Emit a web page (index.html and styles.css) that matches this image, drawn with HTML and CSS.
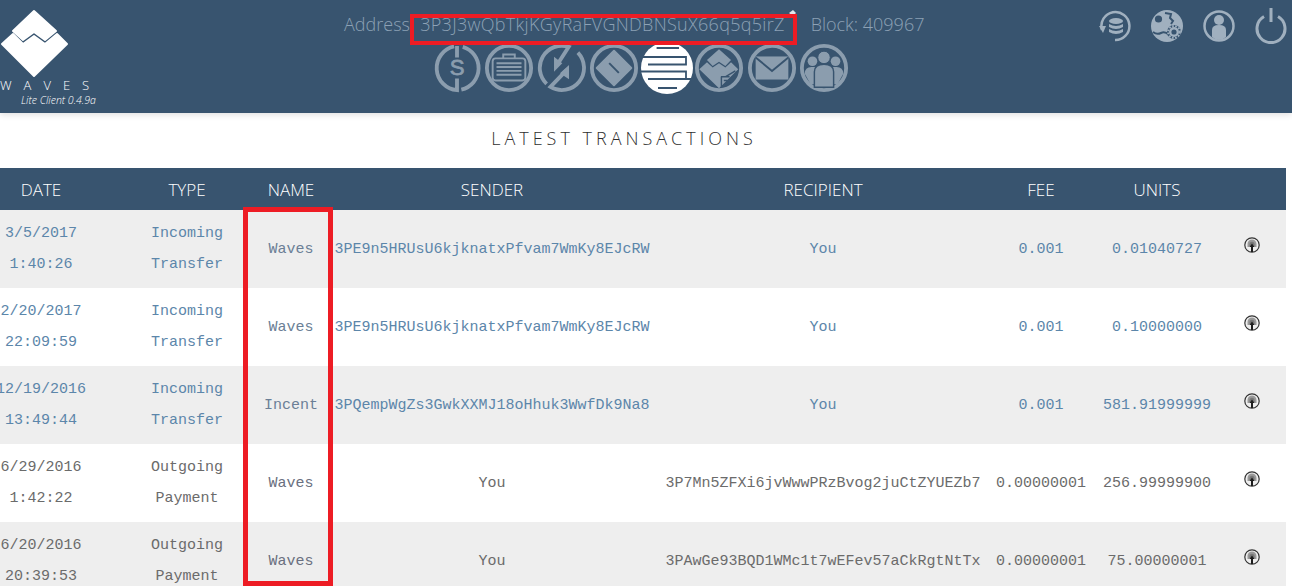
FILE: index.html
```html
<!DOCTYPE html>
<html lang="en">
<head>
<meta charset="utf-8">
<title>Lite Client</title>
<link rel="stylesheet" href="styles.css">
</head>
<body>
<svg class="defs" width="0" height="0" aria-hidden="true">
  <symbol id="tx" viewBox="0 0 16 16">
    <circle cx="8" cy="8" r="7.200" fill="#eee" stroke="#333" stroke-width="1.200"/>
    <path d="M3.500 10V7a4.500 4.500 0 0 1 9 0v3z" fill="#999"/>
    <path d="M5.500 9V7.200a2.500 2.500 0 0 1 5 0V9z" fill="#777"/>
    <path d="M8 6.500 10.400 10H9v5H7v-5H5.600z" fill="#1c1c1c"/>
  </symbol>
</svg>
<header class="top">
  <div class="brand">
    <svg class="mark" viewBox="0 9 70 70" width="70" height="70">
      <path d="M34 11 56 31 45 40 34 32 23 40 13 31z" fill="#fff" stroke="#fff" stroke-width="2" stroke-linejoin="round"/>
      <path d="M2 44 13 34 23 44 34 36 45 44 57 34 67 44 34 76z" fill="#fff" stroke="#fff" stroke-width="2" stroke-linejoin="round"/>
    </svg>
    <div class="wordmark">WAVES</div>
    <div class="version">Lite Client 0.4.9a</div>
  </div>
  <div class="center">
    <div class="status">
      <span>Address:</span>
      <span class="addr">3P3J3wQbTkjKGyRaFVGNDBNSuX66q5q5irZ</span>
      <svg class="pin" viewBox="0 0 8 8" width="8" height="8"><path d="M1 3 5 0l3 3-3 3z" fill="#dfe6ec"/></svg>
      <span class="block">Block: 409967</span>
    </div>
    <nav class="nav">
      <svg class="ico" viewBox="0 0 52 52"><path d="M23 3.600A23 23 0 0 0 26 49V37M26 3V15M32 4A23 23 0 0 1 30.500 48.500" fill="none" stroke="currentColor" stroke-width="4"/><text x="26" y="33" class="ico-s">S</text></svg>
      <svg class="ico" viewBox="0 0 52 52"><circle cx="26" cy="26" r="23" fill="none" stroke="currentColor" stroke-width="4"/><rect x="9" y="16" width="34" height="23" rx="3" fill="none" stroke="currentColor" stroke-width="2"/><path d="M20 16v-4h12v4M13 21h26M13 25h26M13 29h26M13 33h26" fill="none" stroke="currentColor" stroke-width="2"/></svg>
      <svg class="ico" viewBox="0 0 52 52"><path d="M10 42.500A23 23 0 0 1 33 4L22 21M42.500 10A23 23 0 0 1 14 45.600L31 28" fill="none" stroke="currentColor" stroke-width="4"/><path d="M17.700 14.200V29.800L26.300 21zM33.300 22.900V37.800L23.900 31.500z" fill="currentColor"/></svg>
      <svg class="ico" viewBox="0 0 52 52"><circle cx="26" cy="26" r="23" fill="none" stroke="currentColor" stroke-width="4"/><path d="M26 8 44 26 26 44 8 26z" fill="currentColor" stroke="currentColor" stroke-width="2" stroke-linejoin="round"/><path d="M21 21 31 31" stroke="#38546f" stroke-width="2"/></svg>
      <svg class="ico ico-on" viewBox="0 0 52 52"><circle cx="26" cy="26" r="26" fill="#fff"/><path d="M15.600 6H38M0 15H45V22.500H7M0 29.500H45V37H7M17 46H36" fill="none" stroke="#38546f" stroke-width="1.800"/><path d="M7 37H52" stroke="#38546f" stroke-width="1.800"/></svg>
      <svg class="ico" viewBox="0 0 52 52"><circle cx="26" cy="26" r="23" fill="none" stroke="currentColor" stroke-width="4"/><path d="M26 6.600 38.500 17.700 32.600 24 26 19.500 19.400 24 13.500 17.700z" fill="currentColor"/><path d="M5.500 27.400 13.500 20 19.400 25.500 26 21 32.600 25.500 38.500 20 46 27.400 26 47z" fill="currentColor"/><path d="M28 35H37M28.500 35V46M33 35L43 29M31 39H35" fill="none" stroke="#38546f" stroke-width="1.500"/></svg>
      <svg class="ico" viewBox="0 0 52 52"><circle cx="26" cy="26" r="23" fill="none" stroke="currentColor" stroke-width="4"/><rect x="9" y="14" width="34" height="24" fill="currentColor"/><path d="M9 15 26 29 43 15" fill="none" stroke="#38546f" stroke-width="2"/></svg>
      <svg class="ico" viewBox="0 0 52 52"><circle cx="26" cy="26" r="23" fill="none" stroke="currentColor" stroke-width="4"/><circle cx="14" cy="19" r="5" fill="currentColor"/><circle cx="38" cy="19" r="5" fill="currentColor"/><path d="M6 32q0-7 7-7h26q7 0 7 7L40 43 12 43z" fill="currentColor"/><circle cx="26" cy="15" r="6.500" fill="currentColor" stroke="#38546f"/><path d="M16 46V30q0-8 10-8t10 8V46z" fill="currentColor" stroke="#38546f" stroke-width="1.500"/></svg>
    </nav>
  </div>
  <div class="tools">
    <svg class="tool" viewBox="0 0 32 36"><path d="M3 22A14 14 0 1 1 16 32" fill="none" stroke="currentColor" stroke-width="2.500"/><path d="M0 18h7l-3 7z" fill="currentColor"/><ellipse cx="17" cy="13" rx="7" ry="3" fill="currentColor"/><path d="M10 16q7 4 14 0v3q-7 4-14 0zM10 21q7 4 14 0v3q-7 4-14 0z" fill="currentColor"/></svg>
    <svg class="tool" viewBox="0 0 32 36"><circle cx="16" cy="18" r="16" fill="currentColor"/><circle cx="7.500" cy="11" r="3.600" fill="#38546f"/><path d="M14 5l6 1-1 4 3 3-2 3" fill="none" stroke="#38546f" stroke-width="2"/><path d="M2 24q4 3 8 1t8 2" fill="none" stroke="#38546f" stroke-width="2"/><circle cx="23" cy="24" r="7" fill="#38546f"/><circle cx="23" cy="24" r="3.800" fill="none" stroke="currentColor" stroke-width="2.400"/><circle cx="23" cy="24" r="6" fill="none" stroke="currentColor" stroke-width="1.800" stroke-dasharray="1.700 1.500"/></svg>
    <svg class="tool" viewBox="0 0 32 36"><circle cx="16" cy="18" r="14.500" fill="none" stroke="currentColor" stroke-width="2.500"/><circle cx="16" cy="12" r="5" fill="currentColor"/><path d="M9 22q0-5 7-5t7 5v7q-3 3-7 3t-7-3z" fill="currentColor"/></svg>
    <svg class="tool" viewBox="0 0 32 36"><path d="M9 8.500a14 14 0 1 0 14 0" fill="none" stroke="currentColor" stroke-width="3"/><path d="M16 0V14" stroke="currentColor" stroke-width="3"/></svg>
  </div>
</header>
<div class="mark-box mark-addr"></div>
<main class="page">
  <h1 class="title">LATEST TRANSACTIONS</h1>
  <table class="tx">
    <colgroup>
      <col class="c-date"><col class="c-type"><col class="c-name"><col class="c-sender"><col class="c-recipient"><col class="c-fee"><col class="c-units"><col class="c-act">
    </colgroup>
    <thead>
      <tr><th>DATE</th><th>TYPE</th><th>NAME</th><th>SENDER</th><th>RECIPIENT</th><th>FEE</th><th>UNITS</th><th></th></tr>
    </thead>
    <tbody>
      <tr class="in">
        <td>3/5/2017<br>1:40:26</td><td>Incoming<br>Transfer</td><td class="nm">Waves</td><td>3PE9n5HRUsU6kjknatxPfvam7WmKy8EJcRW</td><td>You</td><td>0.001</td><td>0.01040727</td>
        <td class="act"><svg class="tx-ico"><use href="#tx"/></svg></td>
      </tr>
      <tr class="in">
        <td>2/20/2017<br>22:09:59</td><td>Incoming<br>Transfer</td><td class="nm">Waves</td><td>3PE9n5HRUsU6kjknatxPfvam7WmKy8EJcRW</td><td>You</td><td>0.001</td><td>0.10000000</td>
        <td class="act"><svg class="tx-ico"><use href="#tx"/></svg></td>
      </tr>
      <tr class="in">
        <td>12/19/2016<br>13:49:44</td><td>Incoming<br>Transfer</td><td class="nm">Incent</td><td>3PQempWgZs3GwkXXMJ18oHhuk3WwfDk9Na8</td><td>You</td><td>0.001</td><td>581.91999999</td>
        <td class="act"><svg class="tx-ico"><use href="#tx"/></svg></td>
      </tr>
      <tr class="out">
        <td>6/29/2016<br>1:42:22</td><td>Outgoing<br>Payment</td><td class="nm">Waves</td><td>You</td><td>3P7Mn5ZFXi6jvWwwPRzBvog2juCtZYUEZb7</td><td>0.00000001</td><td>256.99999900</td>
        <td class="act"><svg class="tx-ico"><use href="#tx"/></svg></td>
      </tr>
      <tr class="out">
        <td>6/20/2016<br>20:39:53</td><td>Outgoing<br>Payment</td><td class="nm">Waves</td><td>You</td><td>3PAwGe93BQD1WMc1t7wEFev57aCkRgtNtTx</td><td>0.00000001</td><td>75.00000001</td>
        <td class="act"><svg class="tx-ico"><use href="#tx"/></svg></td>
      </tr>
    </tbody>
  </table>
</main>
<div class="mark-box mark-name"></div>
</body>
</html>
```
FILE: styles.css
```css
* { box-sizing: border-box; }
html, body { margin: 0; height: 586px; overflow: hidden; background: #fff; }
body { position: relative; font-family: "Open Sans", "Liberation Sans", sans-serif; }
.defs { position: absolute; }

.top {
  height: 113px;
  background: #38546f;
  display: grid;
  grid-template-columns: 1fr 604px 1fr;
  box-shadow: 0 2px 6px rgba(0, 0, 0, .12);
  position: relative;
}
.brand { display: flex; flex-direction: column; padding-top: 9px; }
.mark { display: block; }
.wordmark {
  color: #fff; font-size: 13px; font-weight: 300; line-height: 12px; letter-spacing: 12px;
  width: 94px; white-space: nowrap;
}
.version {
  color: #fff; font-size: 10.500px; font-style: italic; font-weight: 300; line-height: 12px;
  margin: 3px 0 0 21px; white-space: nowrap;
}
.center { display: flex; flex-direction: column; align-items: center; padding-top: 11px; }
.status {
  color: #8ca1b5; font-size: 18px; font-weight: 300; line-height: 26px;
  display: flex; align-items: flex-start; white-space: nowrap; width: 604px;
}
.addr { margin-left: 6px; letter-spacing: .3px; }
.pin { margin: -1px 0 0 3px; }
.block { margin-left: 15px; }
.nav { display: flex; gap: 2.500px; margin-top: 5px; margin-left: -11px; }
.ico { width: 50px; height: 52px; color: #8b9dae; }
.ico-on { margin: 0 -1px; width: 52px; }
.ico-s { font: 400 23px "Liberation Sans", sans-serif; fill: currentColor; stroke: currentColor; stroke-width: .8px; text-anchor: middle; }
.tools { display: flex; gap: 20px; justify-content: flex-end; padding: 8px 5px 0 0; align-items: flex-start; }
.tool { width: 32px; height: 36px; color: #a0b0bf; }

.page { width: 1326px; margin-left: -40px; }
.title {
  margin: 0; height: 55px; padding: 13px 0 0 2px; text-align: center;
  font-size: 18px; font-weight: 300; letter-spacing: 4px; line-height: 24px; color: #2f2f2f;
}
.tx { width: 100%; table-layout: fixed; border-collapse: collapse; }
.c-date { width: 162px; }
.c-type { width: 130px; }
.c-name { width: 78px; }
.c-sender { width: 324px; }
.c-recipient { width: 338px; }
.c-fee { width: 98px; }
.c-units { width: 134px; }
.c-act { width: 62px; }
.tx th {
  height: 42px; padding: 0; background: #38546f; color: #fff;
  font-size: 17px; font-weight: 300; text-align: center;
}
.tx td {
  height: 78px; padding: 0; text-align: center; white-space: nowrap;
  font-family: "Liberation Mono", "DejaVu Sans Mono", monospace; font-size: 15px; line-height: 31px;
}
.tx tbody tr:nth-child(odd) { background: #eee; }
.in td { color: #5c86aa; }
.out td { color: #6b6b6b; }
.tx td.nm { color: #6b7f96; }
.tx .out td.nm { color: #6a7080; }
.tx td.act { padding-right: 6px; }
.tx-ico { display: block; width: 16px; height: 16px; margin: 0 auto 8px; }

.mark-box { position: absolute; pointer-events: none; }
.mark-addr { left: 410px; top: 14px; width: 387px; height: 31px; border: 4px solid #ed1c24; }
.mark-name { left: 243px; top: 207px; width: 90px; height: 379px; border: 5px solid #ed1c24; }
```
